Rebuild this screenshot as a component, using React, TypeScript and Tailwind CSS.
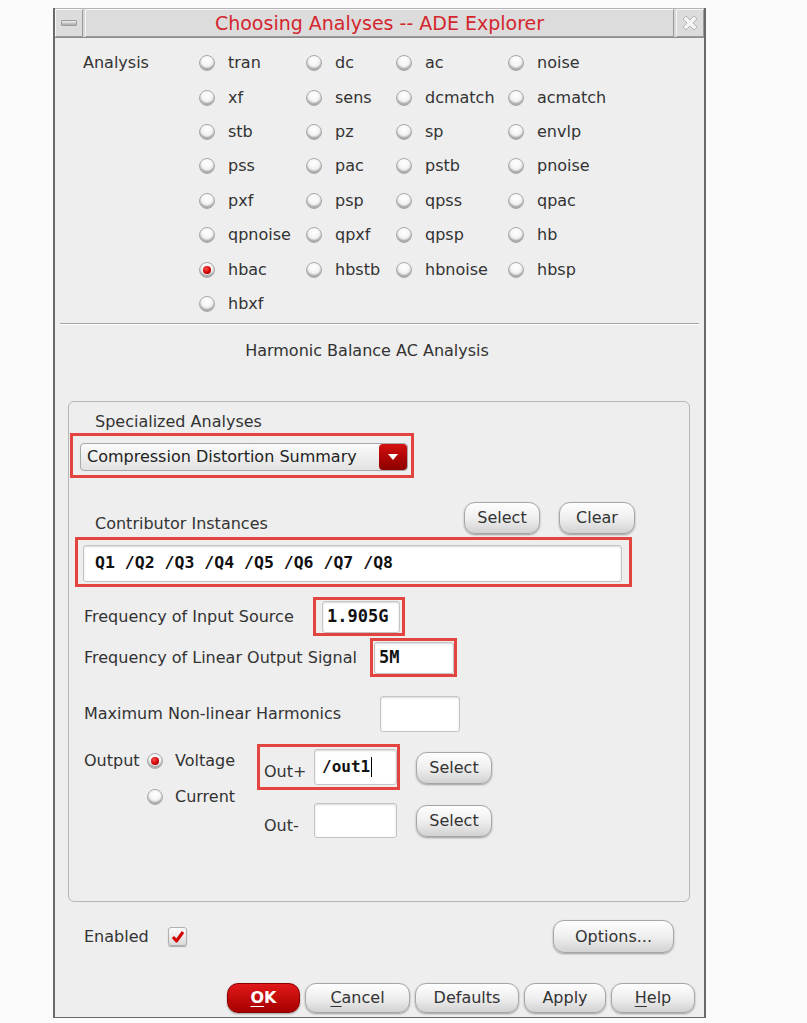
import type { ReactNode } from "react";

const ui = "font-['DejaVu_Sans',sans-serif]";
const mono = "font-['DejaVu_Sans_Mono',monospace]";

function Radio({ checked = false }: { checked?: boolean }) {
  return (
    <div className="w-[16px] h-[16px] shrink-0 rounded-full border border-[#a8a8a8] bg-[radial-gradient(circle_at_50%_30%,#ffffff_0%,#f2f2f2_55%,#c4c4c4_100%)] shadow-[inset_0_-2px_2px_rgba(0,0,0,0.28)] flex items-center justify-center">
      {checked && (
        <div className="w-[8px] h-[8px] rounded-full bg-[radial-gradient(circle_at_40%_35%,#ff5050_0%,#d00000_55%,#7a0000_100%)]" />
      )}
    </div>
  );
}

function Btn({ children, className = "" }: { children: ReactNode; className?: string }) {
  return (
    <div
      className={
        "flex items-center justify-center rounded-[11px] border border-[#a6a6a6] bg-gradient-to-b from-[#fefefe] via-[#efefef] to-[#d2d2d2] shadow-[0_1px_2px_rgba(0,0,0,0.35)] text-[#333] text-[16px] " +
        className
      }
    >
      {children}
    </div>
  );
}

function Field({ children, className = "" }: { children?: ReactNode; className?: string }) {
  return (
    <div
      className={
        "bg-white border border-[#c4c4c4] rounded-[3px] shadow-[inset_0_1px_2px_rgba(0,0,0,0.15)] flex items-center font-bold text-[#111] " +
        mono +
        " " +
        className
      }
    >
      {children}
    </div>
  );
}

const analyses = [
  ["tran", "dc", "ac", "noise"],
  ["xf", "sens", "dcmatch", "acmatch"],
  ["stb", "pz", "sp", "envlp"],
  ["pss", "pac", "pstb", "pnoise"],
  ["pxf", "psp", "qpss", "qpac"],
  ["qpnoise", "qpxf", "qpsp", "hb"],
  ["hbac", "hbstb", "hbnoise", "hbsp"],
  ["hbxf"],
];

export default function App() {
  return (
    <div className={"min-h-screen bg-[#fbfbfb] pt-[8px] pl-[53px] text-[#333] " + ui}>
      <div className="w-[653px] border-l-2 border-r-2 border-b border-[#6a6a6a] bg-[#eeeeee] flex flex-col">
        {/* Title bar */}
        <div className="h-[30px] flex gap-[2px] bg-[#d6d6d6] border-t border-[#b4b4b4] border-b border-b-[#8e8e8e]">
          <div className="w-[28px] flex items-center justify-center bg-[#dcdcdc] border-t border-l border-[#f6f6f6] border-r border-r-[#9a9a9a] border-b border-b-[#9a9a9a]">
            <div className="w-[16px] h-[6px] rounded-[1px] bg-gradient-to-b from-[#f2f2f2] to-[#a8a8a8] border border-[#9c9c9c]" />
          </div>
          <div className="flex-1 flex items-center justify-center bg-[#dcdcdc] border-t border-l border-[#f6f6f6] border-r border-r-[#9a9a9a] border-b border-b-[#9a9a9a] text-[#d3262e] text-[19px]">
            Choosing Analyses -- ADE Explorer
          </div>
          <div className="w-[28px] flex items-center justify-center bg-[#dcdcdc] border-t border-l border-[#f6f6f6] border-r border-r-[#9a9a9a] border-b border-b-[#9a9a9a]">
            <svg width="20" height="20" viewBox="0 0 20 20">
              <path
                d="M3 6 L6 3 L10 7 L14 3 L17 6 L13 10 L17 14 L14 17 L10 13 L6 17 L3 14 L7 10 Z"
                fill="#f4f4f4"
                stroke="#b4b4b4"
                strokeWidth="1"
              />
            </svg>
          </div>
        </div>

        {/* Analysis radios */}
        <div className="mt-[8px] flex">
          <div className="w-[144px] pl-[28px] h-[34.4px] flex items-center text-[16px]">Analysis</div>
          <div className="grid grid-cols-[107px_90px_112px_auto]">
            {analyses.flat().map((name) => (
              <div key={name} className="h-[34.4px] flex items-center gap-[13px] text-[16px]">
                <Radio checked={name === "hbac"} />
                <span>{name}</span>
              </div>
            ))}
          </div>
        </div>

        <div className="mt-[2px] mx-[5px] border-t border-[#a4a4a4] border-b border-b-white" />

        <div className="mt-[14px] h-[24px] flex items-center justify-center pr-[25px] text-[16px]">
          Harmonic Balance AC Analysis
        </div>

        {/* Group box */}
        <div className="mt-[38px] ml-[13px] w-[622px] h-[501px] border border-[#b6b6b6] rounded-[6px] flex flex-col text-[16px]">
          <div className="mt-[10px] h-[20px] leading-[20px] pl-[26px]">Specialized Analyses</div>

          <div className="mt-[1px] ml-[1px] w-[344px] h-[45px] border-[3px] border-[#e2453f] pt-[7px] pl-[7px]">
            <div className="w-[328px] h-[28px] rounded-[4px] border border-[#a8a8a8] bg-gradient-to-b from-[#fbfbfb] to-[#e2e2e2] flex items-center">
              <span className="flex-1 pl-[6px] text-[#222]">Compression Distortion Summary</span>
              <div className="w-[28px] h-[26px] rounded-[4px] bg-gradient-to-b from-[#d41010] to-[#8c0000] flex items-center justify-center">
                <svg width="10" height="6" viewBox="0 0 10 6">
                  <path d="M0 0 L10 0 L5 6 Z" fill="#ffffff" />
                </svg>
              </div>
            </div>
          </div>

          <div className="mt-[24px] h-[32px] flex">
            <div className="w-[395px] pl-[26px] self-end leading-[20px]">Contributor Instances</div>
            <Btn className="w-[76px] h-[32px]">Select</Btn>
            <Btn className="ml-[19px] w-[76px] h-[32px]">Clear</Btn>
          </div>

          <div className="mt-[3px] ml-[6px] w-[557px] h-[50px] border-[3px] border-[#e2453f] pt-[5px] pl-[5px]">
            <Field className="w-[539px] h-[37px] pl-[11px] text-[16.5px]">Q1 /Q2 /Q3 /Q4 /Q5 /Q6 /Q7 /Q8</Field>
          </div>

          <div className="mt-[10px] h-[39px] flex items-center">
            <div className="w-[244px] pl-[15px]">Frequency of Input Source</div>
            <div className="w-[92px] h-[39px] border-[3px] border-[#e2453f] pt-[1px] pl-[6px]">
              <Field className="w-[78px] h-[32px] pl-[4px] text-[17px] font-semibold">1.905G</Field>
            </div>
          </div>

          <div className="mt-[2px] h-[39px] flex items-center">
            <div className="w-[301px] pl-[15px]">Frequency of Linear Output Signal</div>
            <div className="w-[87px] h-[39px] border-[3px] border-[#e2453f] pt-[1px] pl-[1px]">
              <Field className="w-[80px] h-[32px] pl-[4px] text-[17px]">5M</Field>
            </div>
          </div>

          <div className="mt-[19px] h-[36px] flex items-center">
            <div className="w-[311px] pl-[15px]">Maximum Non-linear Harmonics</div>
            <Field className="w-[80px] h-[36px]" />
          </div>

          {/* Output */}
          <div className="mt-[12px] flex">
            <div className="w-[188px] flex flex-col">
              <div className="h-[34px] flex items-center">
                <span className="w-[78px] pl-[15px] overflow-hidden whitespace-nowrap">Output</span>
                <Radio checked />
                <span className="ml-[12px]">Voltage</span>
              </div>
              <div className="h-[38px] flex items-center">
                <span className="w-[78px]" />
                <Radio />
                <span className="ml-[12px]">Current</span>
              </div>
            </div>
            <div className="flex flex-col">
              <div className="flex">
                <div className="w-[143px] h-[46px] border-[3px] border-[#e2453f] flex">
                  <span className="w-[54px] pl-[4px] pt-[15px] leading-[20px]">Out+</span>
                  <Field className="mt-[2px] w-[83px] h-[36px] pl-[7px] text-[16px]">
                    /out1<span className="ml-[1px] w-[1px] h-[20px] bg-black" />
                  </Field>
                </div>
                <Btn className="ml-[16px] mt-[8px] w-[76px] h-[32px]">Select</Btn>
              </div>
              <div className="mt-[13px] flex">
                <span className="w-[57px] pl-[7px] pt-[13px] leading-[20px]">Out-</span>
                <Field className="w-[83px] h-[35px]" />
                <Btn className="ml-[19px] mt-[2px] w-[76px] h-[32px]">Select</Btn>
              </div>
            </div>
          </div>
        </div>

        {/* Enabled + Options */}
        <div className="mt-[18px] h-[33px] flex items-center text-[16px]">
          <span className="w-[113px] pl-[29px]">Enabled</span>
          <div className="w-[19px] h-[19px] rounded-[3px] border border-[#b0b0b0] bg-gradient-to-b from-[#fdfdfd] to-[#dadada] shadow-[0_1px_1px_rgba(0,0,0,0.3)] flex items-center justify-center">
            <svg width="14" height="14" viewBox="0 0 14 14">
              <path d="M2 7 L5.5 11 L12 2" fill="none" stroke="#d40000" strokeWidth="3" strokeLinejoin="round" />
            </svg>
          </div>
          <Btn className="ml-auto mr-[30px] w-[121px] h-[33px]">Options...</Btn>
        </div>

        {/* Bottom buttons */}
        <div className="mt-[30px] mb-[4px] h-[30px] flex justify-end gap-[5px] pr-[9px] text-[16px]">
          <div className="w-[73px] h-[30px] rounded-[11px] border border-[#8a0000] bg-gradient-to-b from-[#e01818] to-[#a80000] shadow-[0_1px_2px_rgba(0,0,0,0.35)] flex items-center justify-center text-white font-bold">
            <span className="underline underline-offset-[3px]">O</span>K
          </div>
          <Btn className="w-[105px] h-[30px]">
            <span className="underline underline-offset-[3px]">C</span>ancel
          </Btn>
          <Btn className="w-[104px] h-[30px]">Defaults</Btn>
          <Btn className="w-[82px] h-[30px]">Apply</Btn>
          <Btn className="w-[84px] h-[30px]">
            <span className="underline underline-offset-[3px]">H</span>elp
          </Btn>
        </div>
      </div>
    </div>
  );
}
